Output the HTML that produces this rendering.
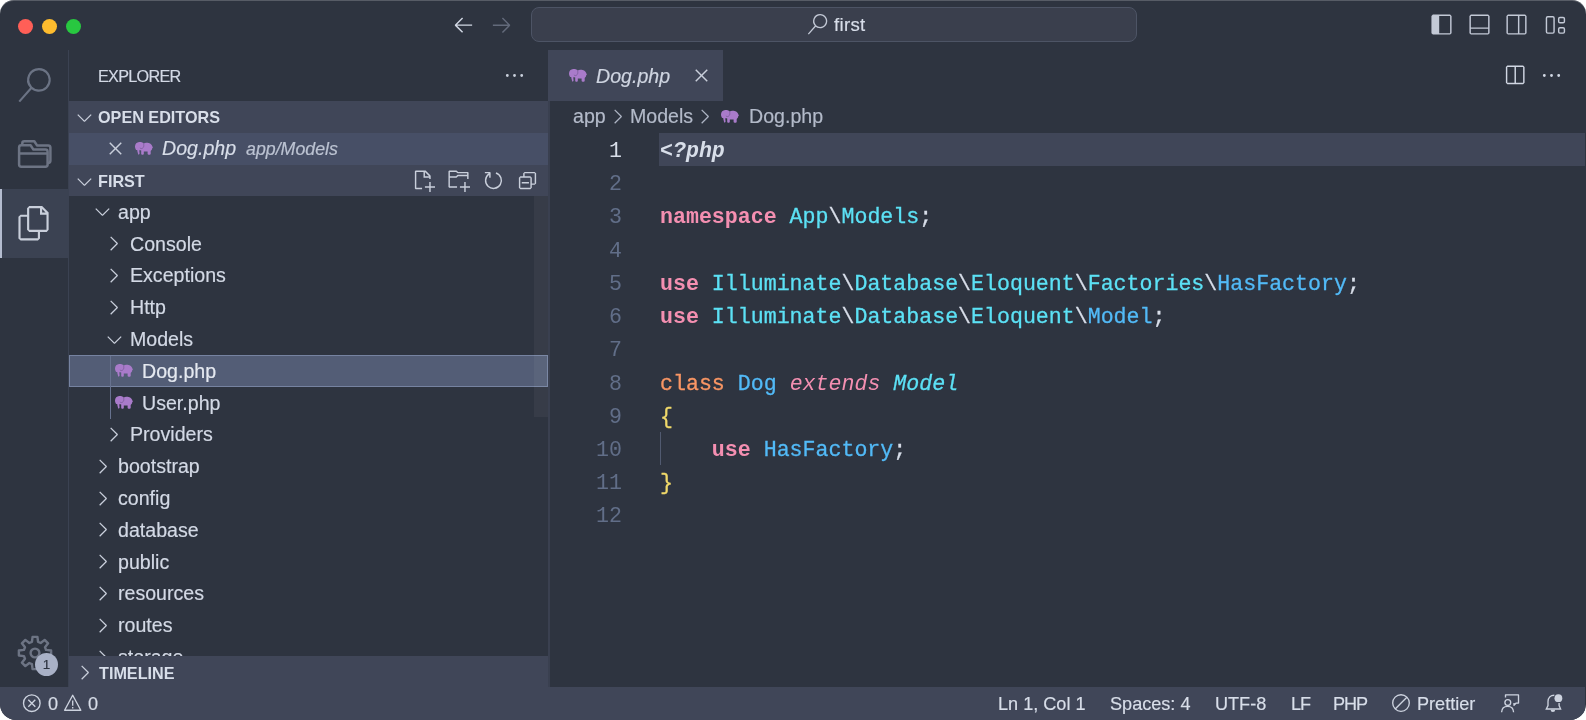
<!DOCTYPE html>
<html lang="en">
<head>
<meta charset="utf-8">
<title>Dog.php — first</title>
<style>
*{box-sizing:border-box;margin:0;padding:0}
html,body{width:1586px;height:720px;background:#fff;overflow:hidden}
body{font-family:"Liberation Sans",sans-serif;color:#d8dee9;font-size:19.6px}
#win{position:absolute;left:0;top:0;width:1586px;height:720px;background:#2e3440;border-radius:14px 14px 16px 16px;overflow:hidden}
#hl{position:absolute;left:0;top:0;right:0;bottom:0;border-radius:14px 14px 16px 16px;box-shadow:inset 0 1px 0 rgba(255,255,255,.2);pointer-events:none;z-index:9}
.abs{position:absolute}
svg{position:absolute;overflow:visible}
.t{position:absolute;white-space:nowrap;line-height:1;-webkit-text-stroke:.18px}
.t,.ln,.code{will-change:transform}
.b{font-weight:bold;-webkit-text-stroke:0}
.i{font-style:italic}
.dot{position:absolute;top:18.5px;width:15px;height:15px;border-radius:50%}
.ln{position:absolute;width:60px;left:561.5px;text-align:right;font-family:"Liberation Mono",monospace;font-size:21.6px;color:#616e88;line-height:1}
.code{position:absolute;left:660px;font-family:"Liberation Mono",monospace;font-size:21.6px;line-height:1;white-space:pre;color:#d8dee9;-webkit-text-stroke:.3px}
.k{color:#f48fb1;font-weight:bold;-webkit-text-stroke:0}
.n{color:#5ce1f5}
.c{color:#52baf7}
.o{color:#f99664}
.y{color:#f0d96a}
</style>
</head>
<body>
<div id="win">
<div class="dot" style="left:17.5px;background:#ff5f57"></div>
<div class="dot" style="left:41.5px;background:#febc2e"></div>
<div class="dot" style="left:65.5px;background:#28c840"></div>
<div class="abs" style="left:531px;top:7.3px;width:606px;height:35px;background:#3a3f4d;border:1.4px solid #4d5465;border-radius:8px"></div>
<svg style="left:451.9px;top:13px" width="23" height="23" viewBox="0 0 16 16"><path fill="#d1d7e3" fill-rule="evenodd" d="M7 3.093l-5 5V8.8l5 5 .707-.707-4.146-4.147H14v-1H3.56L7.708 3.8 7 3.093z"/></svg>
<svg style="left:489.8px;top:13px" width="23" height="23" viewBox="0 0 16 16"><path fill="#636a7b" fill-rule="evenodd" d="M9 13.887l5-5V8.18l-5-5-.707.707 4.146 4.147H2v1h10.44L8.292 13.18l.707.707z"/></svg>
<svg style="left:806.5px;top:13.7px" width="20.7" height="20.7" viewBox="0 0 24 24"><path fill="#c3c9d6" fill-rule="evenodd" d="M15.25 0a8.25 8.25 0 0 0-6.18 13.72L1 22.88l1.12 1 8.05-9.12A8.251 8.251 0 1 0 15.25.01V0zm0 15a6.75 6.75 0 1 1 0-13.5 6.75 6.75 0 0 1 0 13.5z"/></svg>
<div class="t" style="left:834.4px;top:16px;font-size:18.6px;color:#d8dee9;letter-spacing:.3px">first</div>
<svg style="left:1430.4px;top:12.5px" width="23" height="23" viewBox="0 0 16 16"><path fill="#c3c9d6" fill-rule="evenodd" d="M2 1L1 2v12l1 1h12l1-1V2l-1-1H2zm12 13H6.400V2h7.600v12z"/></svg>
<svg style="left:1467.6px;top:12.5px" width="23" height="23" viewBox="0 0 16 16"><path fill="#c3c9d6" fill-rule="evenodd" d="M2 1L1 2v12l1 1h12l1-1V2l-1-1H2zm0 9V2h12v8H2zm0 1h12v3H2v-3z"/></svg>
<svg style="left:1505.4px;top:12.5px" width="23" height="23" viewBox="0 0 16 16"><path fill="#c3c9d6" fill-rule="evenodd" d="M2 1L1 2v12l1 1h12l1-1V2l-1-1H2zm0 13V2h7v12H2zm8 0V2h4v12h-4z"/></svg>
<svg style="left:1543px;top:12.5px" width="23" height="23" viewBox="0 0 16 16"><g fill="none" stroke="#c3c9d6" stroke-width="1"><rect x="2.400" y="2.600" width="5.300" height="11.400" rx=".9"/><rect x="10.900" y="3.100" width="4" height="3.700" rx=".9"/><rect x="10.900" y="10.300" width="4" height="3.700" rx=".9"/></g></svg>
<div class="abs" style="left:0px;top:189px;width:68px;height:69px;background:#3b4252;"></div>
<div class="abs" style="left:0px;top:189px;width:2px;height:69px;background:#b4bccf;"></div>
<div class="abs" style="left:68px;top:50px;width:1px;height:637px;background:#3b4252;"></div>
<svg style="left:17.2px;top:67.7px" width="34.5" height="34.5" viewBox="0 0 24 24"><path fill="#6b7384" fill-rule="evenodd" d="M15.25 0a8.25 8.25 0 0 0-6.18 13.72L1 22.88l1.12 1 8.05-9.12A8.251 8.251 0 1 0 15.25.01V0zm0 15a6.75 6.75 0 1 1 0-13.5 6.75 6.75 0 0 1 0 13.5z"/></svg>
<svg style="left:0;top:0" width="70" height="200" viewBox="0 0 70 200"><g fill="none" stroke="#6d7484" stroke-width="2.5" stroke-linejoin="round" stroke-linecap="round"><path d="M19.100 147.500Q19.100 145.300 21.300 145.300H30.600L33.400 149.600H45.400Q47.600 149.600 47.600 151.800V164.500Q47.600 166.700 45.400 166.700H21.300Q19.100 166.700 19.100 164.500ZM19.100 153.600H47.600"/><path d="M22.300 144.200V143.200Q22.300 141.200 24.300 141.200H34.300L37 145.400H48.200Q50.400 145.400 50.400 147.600V160.500Q50.400 162.600 48.600 162.900"/></g></svg>
<svg style="left:17.2px;top:206px" width="34.5" height="34.5" viewBox="0 0 24 24"><path fill="#c9cfdb" fill-rule="evenodd" d="M17.5 0h-9L7 1.5V6H2.5L1 7.5v15.07L2.500 24h12.07L16 22.570V18h4.7l1.3-1.430V4.500L17.500 0zm0 2.120l2.380 2.380H17.500V2.120zm-3 20.380h-12v-15H7v9.070L8.500 18h6v4.500zm6-6h-12v-15H16V6h4.500v10.500z"/></svg>
<svg style="left:34.5px;top:652.5px" width="1" height="1" viewBox="0 0 1 1"><g fill="none" stroke="#6d7484" stroke-width="2.4" stroke-linejoin="round"><path d="M-3.07 -11.08 L-2.44 -16.12 L2.44 -16.12 L3.07 -11.08 L5.67 -10.01 L9.67 -13.12 L13.12 -9.67 L10.01 -5.67 L11.08 -3.07 L16.12 -2.44 L16.12 2.44 L11.08 3.07 L10.01 5.67 L13.12 9.67 L9.67 13.12 L5.67 10.01 L3.07 11.08 L2.44 16.12 L-2.44 16.12 L-3.07 11.08 L-5.67 10.01 L-9.67 13.12 L-13.12 9.67 L-10.01 5.67 L-11.08 3.07 L-16.12 2.44 L-16.12 -2.44 L-11.08 -3.07 L-10.01 -5.67 L-13.12 -9.67 L-9.67 -13.12 L-5.67 -10.01Z"/><circle cx="0" cy="0" r="4.400"/></g></svg>
<div class="abs" style="left:35px;top:653px;width:23px;height:23px;background:#a9b1c6;border-radius:50%"></div>
<div class="t" style="left:35px;top:658px;font-size:13.5px;color:#2e3440;width:23px;text-align:center">1</div>
<div class="t" style="left:97.7px;top:68px;font-size:16.2px;color:#d3d9e5;letter-spacing:-.7px">EXPLORER</div>
<svg style="left:502.9px;top:64.3px" width="23" height="23" viewBox="0 0 16 16"><path fill="#c9cfdb" fill-rule="evenodd" d="M4 8a1 1 0 1 1-2 0 1 1 0 0 1 2 0zm5 0a1 1 0 1 1-2 0 1 1 0 0 1 2 0zm5 0a1 1 0 1 1-2 0 1 1 0 0 1 2 0z"/></svg>
<div class="abs" style="left:69px;top:101px;width:479px;height:32px;background:#404658;"></div>
<svg style="left:72.6px;top:105.7px" width="23" height="23" viewBox="0 0 16 16"><path fill="#c9cfdb" fill-rule="evenodd" d="M7.976 10.072l4.357-4.357.62.618L8.284 11h-.618L3 6.333l.619-.618 4.357 4.357z"/></svg>
<div class="t b" style="left:98px;top:109px;font-size:16.2px;color:#d8dee9;">OPEN EDITORS</div>
<div class="abs" style="left:69px;top:133px;width:479px;height:32px;background:#474f66;"></div>
<svg style="left:103.75px;top:137.45px" width="23" height="23" viewBox="0 0 16 16"><path fill="#c9cfdb" fill-rule="evenodd" d="M8 8.707l3.646 3.647.708-.707L8.707 8l3.647-3.646-.707-.708L8 7.293 4.354 3.646l-.707.708L7.293 8l-3.646 3.646.707.708L8 8.707z"/></svg>
<svg style="left:135px;top:141.7px" width="18" height="13" viewBox="0 0 18 13"><path fill="#a97bca" d="M4.200 0.100C6 -0.100 7.800 0.500 8.700 1.500C9.800 0.700 12 0.500 13.600 0.900C15.800 1.400 17.200 3 17.600 4.900L18 5.400L17.300 6C17.200 7.200 16.600 8.200 15.700 8.900L15.700 12C15.700 13.100 12.600 13.100 12.600 12L12.600 9.600L8.800 9.600L8.800 12C8.800 13.100 6.200 13.100 6.200 12L6.200 8.600C5.600 8.500 5 8.300 4.500 8C4.300 9 4.300 10 4.500 10.800C4.700 11.600 4.500 12.400 3.700 12.600C3 12.700 2.800 12 3 11.500C2.600 10.400 2.300 9.200 2.200 8C1.600 8.100 1 7.900 0.800 7.400C0.200 6.600 0 5.600 0 4.600C0 2 1.800 0.300 4.200 0.100Z"/><path fill="none" stroke="#4a3a66" stroke-opacity=".45" stroke-width=".8" d="M8.600 1.700C9.200 3.500 8.800 5.500 7.400 6.300C6.400 6.800 5.400 6.500 4.900 5.800"/></svg>
<div class="t i" style="left:161.5px;top:139px;font-size:19.6px;color:#d8dee9;">Dog.php</div>
<div class="t i" style="left:245.5px;top:141px;font-size:17.8px;color:#bcc3d2;">app/Models</div>
<div class="abs" style="left:69px;top:165px;width:479px;height:31px;background:#404658;"></div>
<svg style="left:72.6px;top:169.7px" width="23" height="23" viewBox="0 0 16 16"><path fill="#c9cfdb" fill-rule="evenodd" d="M7.976 10.072l4.357-4.357.62.618L8.284 11h-.618L3 6.333l.619-.618 4.357 4.357z"/></svg>
<div class="t b" style="left:98px;top:173px;font-size:16.2px;color:#d8dee9;">FIRST</div>
<svg style="left:412px;top:169.1px" width="23" height="23" viewBox="0 0 16 16"><path fill="#c9cfdb" fill-rule="evenodd" d="M9.5 1.1l3.4 3.5.1.4v2h-1V6H8V2H3v11h4v1H2.5l-.5-.5v-12l.5-.5h6.7l.3.1zM9 2v3h2.900L9 2zm4 14h-1v-3H9v-1h3V9h1v3h3v1h-3v3z"/></svg>
<svg style="left:446.8px;top:169.1px" width="23" height="23" viewBox="0 0 16 16"><path fill="#c9cfdb" fill-rule="evenodd" d="M14.5 2H7.710l-.85-.85L6.510 1h-5l-.5.5v11l.5.5H7v-1H1.990V6h4.490l.35-.15.86-.86H14v1.500l-.001.51h1.011V2.500L14.500 2zm-.51 2h-6.500l-.35.15-.86.86H2v-3h4.290l.85.85.36.15H14l-.01.990zM13 16h-1v-3H9v-1h3V9h1v3h3v1h-3v3z"/></svg>
<svg style="left:481.5px;top:169.1px" width="23" height="23" viewBox="0 0 16 16"><path fill="#c9cfdb" fill-rule="evenodd" d="M4.681 3H2V2h3.500l.5.5V6H5V4a5 5 0 1 0 4.530-.761l.302-.954A6 6 0 1 1 4.681 3z"/></svg>
<svg style="left:516.2px;top:169.1px" width="23" height="23" viewBox="0 0 16 16"><path fill="#c9cfdb" fill-rule="evenodd" d="M9 9H4v1h5V9zM5 3l1-1h7l1 1v7l-1 1h-2v2l-1 1H3l-1-1V6l1-1h2V3zm1 2h4l1 1v4h2V3H6v2zm4 1H3v7h7V6z"/></svg>
<div class="abs" style="left:69px;top:355px;width:479px;height:32px;background:#535d76;border:1px solid #7683a1"></div>
<div class="abs" style="left:110px;top:356px;width:1px;height:62.5px;background:#67728f;"></div>
<svg style="left:91.1px;top:200.3px" width="23" height="23" viewBox="0 0 16 16"><path fill="#c9cfdb" fill-rule="evenodd" d="M7.976 10.072l4.357-4.357.62.618L8.284 11h-.618L3 6.333l.619-.618 4.357 4.357z"/></svg>
<div class="t" style="left:118.1px;top:203px;font-size:19.6px;color:#d3d9e5;">app</div>
<svg style="left:102.1px;top:232.1px" width="23" height="23" viewBox="0 0 16 16"><path fill="#c9cfdb" fill-rule="evenodd" d="M10.072 8.024L5.715 3.667l.618-.62L11 7.716v.618L6.333 13l-.618-.619 4.357-4.357z"/></svg>
<div class="t" style="left:130px;top:235px;font-size:19.6px;color:#d3d9e5;">Console</div>
<svg style="left:102.1px;top:263.9px" width="23" height="23" viewBox="0 0 16 16"><path fill="#c9cfdb" fill-rule="evenodd" d="M10.072 8.024L5.715 3.667l.618-.62L11 7.716v.618L6.333 13l-.618-.619 4.357-4.357z"/></svg>
<div class="t" style="left:130px;top:266px;font-size:19.6px;color:#d3d9e5;">Exceptions</div>
<svg style="left:102.1px;top:295.7px" width="23" height="23" viewBox="0 0 16 16"><path fill="#c9cfdb" fill-rule="evenodd" d="M10.072 8.024L5.715 3.667l.618-.62L11 7.716v.618L6.333 13l-.618-.619 4.357-4.357z"/></svg>
<div class="t" style="left:130px;top:298px;font-size:19.6px;color:#d3d9e5;">Http</div>
<svg style="left:102.6px;top:327.5px" width="23" height="23" viewBox="0 0 16 16"><path fill="#c9cfdb" fill-rule="evenodd" d="M7.976 10.072l4.357-4.357.62.618L8.284 11h-.618L3 6.333l.619-.618 4.357 4.357z"/></svg>
<div class="t" style="left:130px;top:330px;font-size:19.6px;color:#d3d9e5;">Models</div>
<svg style="left:114.8px;top:364.1px" width="18" height="13" viewBox="0 0 18 13"><path fill="#a97bca" d="M4.200 0.100C6 -0.100 7.800 0.500 8.700 1.500C9.800 0.700 12 0.500 13.600 0.900C15.800 1.400 17.200 3 17.600 4.900L18 5.400L17.300 6C17.200 7.200 16.600 8.200 15.700 8.900L15.700 12C15.700 13.100 12.600 13.100 12.600 12L12.600 9.600L8.800 9.600L8.800 12C8.800 13.100 6.200 13.100 6.200 12L6.200 8.600C5.600 8.500 5 8.300 4.500 8C4.300 9 4.300 10 4.500 10.800C4.700 11.600 4.500 12.400 3.700 12.600C3 12.700 2.800 12 3 11.500C2.600 10.400 2.300 9.200 2.200 8C1.600 8.100 1 7.900 0.800 7.400C0.200 6.600 0 5.600 0 4.600C0 2 1.800 0.300 4.200 0.100Z"/><path fill="none" stroke="#4a3a66" stroke-opacity=".45" stroke-width=".8" d="M8.600 1.700C9.200 3.500 8.800 5.500 7.400 6.300C6.400 6.800 5.400 6.500 4.900 5.800"/></svg>
<div class="t" style="left:141.9px;top:362px;font-size:19.6px;color:#e5e9f0;">Dog.php</div>
<svg style="left:114.8px;top:395.9px" width="18" height="13" viewBox="0 0 18 13"><path fill="#a97bca" d="M4.200 0.100C6 -0.100 7.800 0.500 8.700 1.500C9.800 0.700 12 0.500 13.600 0.900C15.800 1.400 17.200 3 17.600 4.900L18 5.400L17.300 6C17.200 7.200 16.600 8.200 15.700 8.900L15.700 12C15.700 13.100 12.600 13.100 12.600 12L12.600 9.600L8.800 9.600L8.800 12C8.800 13.100 6.200 13.100 6.200 12L6.200 8.600C5.600 8.500 5 8.300 4.500 8C4.300 9 4.300 10 4.500 10.800C4.700 11.600 4.500 12.400 3.700 12.600C3 12.700 2.800 12 3 11.500C2.600 10.400 2.300 9.200 2.200 8C1.600 8.100 1 7.900 0.800 7.400C0.200 6.600 0 5.600 0 4.600C0 2 1.800 0.300 4.200 0.100Z"/><path fill="none" stroke="#4a3a66" stroke-opacity=".45" stroke-width=".8" d="M8.600 1.700C9.200 3.500 8.800 5.500 7.400 6.300C6.400 6.800 5.400 6.500 4.900 5.800"/></svg>
<div class="t" style="left:141.9px;top:394px;font-size:19.6px;color:#d3d9e5;">User.php</div>
<svg style="left:102.1px;top:422.9px" width="23" height="23" viewBox="0 0 16 16"><path fill="#c9cfdb" fill-rule="evenodd" d="M10.072 8.024L5.715 3.667l.618-.62L11 7.716v.618L6.333 13l-.618-.619 4.357-4.357z"/></svg>
<div class="t" style="left:130px;top:425px;font-size:19.6px;color:#d3d9e5;">Providers</div>
<svg style="left:90.6px;top:454.7px" width="23" height="23" viewBox="0 0 16 16"><path fill="#c9cfdb" fill-rule="evenodd" d="M10.072 8.024L5.715 3.667l.618-.62L11 7.716v.618L6.333 13l-.618-.619 4.357-4.357z"/></svg>
<div class="t" style="left:118.1px;top:457px;font-size:19.6px;color:#d3d9e5;">bootstrap</div>
<svg style="left:90.6px;top:486.5px" width="23" height="23" viewBox="0 0 16 16"><path fill="#c9cfdb" fill-rule="evenodd" d="M10.072 8.024L5.715 3.667l.618-.62L11 7.716v.618L6.333 13l-.618-.619 4.357-4.357z"/></svg>
<div class="t" style="left:118.1px;top:489px;font-size:19.6px;color:#d3d9e5;">config</div>
<svg style="left:90.6px;top:518.3px" width="23" height="23" viewBox="0 0 16 16"><path fill="#c9cfdb" fill-rule="evenodd" d="M10.072 8.024L5.715 3.667l.618-.62L11 7.716v.618L6.333 13l-.618-.619 4.357-4.357z"/></svg>
<div class="t" style="left:118.1px;top:521px;font-size:19.6px;color:#d3d9e5;">database</div>
<svg style="left:90.6px;top:550.1px" width="23" height="23" viewBox="0 0 16 16"><path fill="#c9cfdb" fill-rule="evenodd" d="M10.072 8.024L5.715 3.667l.618-.62L11 7.716v.618L6.333 13l-.618-.619 4.357-4.357z"/></svg>
<div class="t" style="left:118.1px;top:553px;font-size:19.6px;color:#d3d9e5;">public</div>
<svg style="left:90.6px;top:581.9px" width="23" height="23" viewBox="0 0 16 16"><path fill="#c9cfdb" fill-rule="evenodd" d="M10.072 8.024L5.715 3.667l.618-.62L11 7.716v.618L6.333 13l-.618-.619 4.357-4.357z"/></svg>
<div class="t" style="left:118.1px;top:584px;font-size:19.6px;color:#d3d9e5;">resources</div>
<svg style="left:90.6px;top:613.7px" width="23" height="23" viewBox="0 0 16 16"><path fill="#c9cfdb" fill-rule="evenodd" d="M10.072 8.024L5.715 3.667l.618-.62L11 7.716v.618L6.333 13l-.618-.619 4.357-4.357z"/></svg>
<div class="t" style="left:118.1px;top:616px;font-size:19.6px;color:#d3d9e5;">routes</div>
<svg style="left:90.6px;top:645.5px" width="23" height="23" viewBox="0 0 16 16"><path fill="#c9cfdb" fill-rule="evenodd" d="M10.072 8.024L5.715 3.667l.618-.62L11 7.716v.618L6.333 13l-.618-.619 4.357-4.357z"/></svg>
<div class="t" style="left:118.1px;top:648px;font-size:19.6px;color:#d3d9e5;">storage</div>
<div class="abs" style="left:534px;top:196px;width:14px;height:221px;background:rgba(255,255,255,.045);"></div>
<div class="abs" style="left:69px;top:656px;width:479px;height:31px;background:#404658;"></div>
<svg style="left:72.5px;top:660.9px" width="23" height="23" viewBox="0 0 16 16"><path fill="#c9cfdb" fill-rule="evenodd" d="M10.072 8.024L5.715 3.667l.618-.62L11 7.716v.618L6.333 13l-.618-.619 4.357-4.357z"/></svg>
<div class="t b" style="left:98.6px;top:665px;font-size:16.2px;color:#d8dee9;">TIMELINE</div>
<div class="abs" style="left:548px;top:50px;width:2px;height:637px;background:#3a4050;"></div>
<div class="abs" style="left:548px;top:50px;width:175px;height:51px;background:#404658;"></div>
<svg style="left:568.9px;top:68.9px" width="18" height="13" viewBox="0 0 18 13"><path fill="#a97bca" d="M4.200 0.100C6 -0.100 7.800 0.500 8.700 1.500C9.800 0.700 12 0.500 13.600 0.900C15.800 1.400 17.200 3 17.600 4.900L18 5.400L17.300 6C17.200 7.200 16.600 8.200 15.700 8.900L15.700 12C15.700 13.100 12.600 13.100 12.600 12L12.600 9.600L8.800 9.600L8.800 12C8.800 13.100 6.200 13.100 6.200 12L6.200 8.600C5.600 8.500 5 8.300 4.500 8C4.300 9 4.300 10 4.500 10.800C4.700 11.600 4.500 12.400 3.700 12.600C3 12.700 2.800 12 3 11.500C2.600 10.400 2.300 9.200 2.200 8C1.600 8.100 1 7.900 0.800 7.400C0.200 6.600 0 5.600 0 4.600C0 2 1.800 0.300 4.200 0.100Z"/><path fill="none" stroke="#4a3a66" stroke-opacity=".45" stroke-width=".8" d="M8.600 1.700C9.200 3.500 8.800 5.500 7.400 6.300C6.400 6.800 5.400 6.500 4.900 5.800"/></svg>
<div class="t i" style="left:596.4px;top:67px;font-size:19.6px;color:#cfd5e1;">Dog.php</div>
<svg style="left:690px;top:63.6px" width="23" height="23" viewBox="0 0 16 16"><path fill="#c9cfdb" fill-rule="evenodd" d="M8 8.707l3.646 3.647.708-.707L8.707 8l3.647-3.646-.707-.708L8 7.293 4.354 3.646l-.707.708L7.293 8l-3.646 3.646.707.708L8 8.707z"/></svg>
<svg style="left:1502.5px;top:63.9px" width="23" height="23" viewBox="0 0 16 16"><path fill="#d1d7e3" fill-rule="evenodd" d="M14 1H3L2 2v11l1 1h11l1-1V2l-1-1zM8 13H3V2h5v11zm6 0H9V2h5v11z"/></svg>
<svg style="left:1540.2px;top:64.2px" width="23" height="23" viewBox="0 0 16 16"><path fill="#d1d7e3" fill-rule="evenodd" d="M4 8a1 1 0 1 1-2 0 1 1 0 0 1 2 0zm5 0a1 1 0 1 1-2 0 1 1 0 0 1 2 0zm5 0a1 1 0 1 1-2 0 1 1 0 0 1 2 0z"/></svg>
<div class="t" style="left:572.9px;top:107px;font-size:19.6px;color:#b3bac9;">app</div>
<svg style="left:605.7px;top:105.15px" width="23" height="23" viewBox="0 0 16 16"><path fill="#aeb5c4" fill-rule="evenodd" d="M10.072 8.024L5.715 3.667l.618-.62L11 7.716v.618L6.333 13l-.618-.619 4.357-4.357z"/></svg>
<div class="t" style="left:629.8px;top:107px;font-size:19.6px;color:#b3bac9;">Models</div>
<svg style="left:692.6px;top:105.15px" width="23" height="23" viewBox="0 0 16 16"><path fill="#aeb5c4" fill-rule="evenodd" d="M10.072 8.024L5.715 3.667l.618-.62L11 7.716v.618L6.333 13l-.618-.619 4.357-4.357z"/></svg>
<svg style="left:720.9px;top:110px" width="18" height="13" viewBox="0 0 18 13"><path fill="#a97bca" d="M4.200 0.100C6 -0.100 7.800 0.500 8.700 1.500C9.800 0.700 12 0.500 13.600 0.900C15.800 1.400 17.200 3 17.600 4.900L18 5.400L17.300 6C17.200 7.200 16.600 8.200 15.700 8.900L15.700 12C15.700 13.100 12.600 13.100 12.600 12L12.600 9.600L8.800 9.600L8.800 12C8.800 13.100 6.200 13.100 6.200 12L6.200 8.600C5.600 8.500 5 8.300 4.500 8C4.300 9 4.300 10 4.500 10.800C4.700 11.600 4.500 12.400 3.700 12.600C3 12.700 2.800 12 3 11.500C2.600 10.400 2.300 9.200 2.200 8C1.600 8.100 1 7.900 0.800 7.400C0.200 6.600 0 5.600 0 4.600C0 2 1.800 0.300 4.200 0.100Z"/><path fill="none" stroke="#4a3a66" stroke-opacity=".45" stroke-width=".8" d="M8.600 1.700C9.200 3.500 8.800 5.500 7.400 6.300C6.400 6.800 5.400 6.500 4.900 5.800"/></svg>
<div class="t" style="left:748.6px;top:107px;font-size:19.6px;color:#b3bac9;">Dog.php</div>
<div class="abs" style="left:659px;top:133px;width:926px;height:33px;background:#404658;"></div>
<div class="ln" style="top:141px;color:#d8dee9">1</div>
<div class="ln" style="top:174px;">2</div>
<div class="ln" style="top:207px;">3</div>
<div class="ln" style="top:241px;">4</div>
<div class="ln" style="top:274px;">5</div>
<div class="ln" style="top:307px;">6</div>
<div class="ln" style="top:340px;">7</div>
<div class="ln" style="top:374px;">8</div>
<div class="ln" style="top:407px;">9</div>
<div class="ln" style="top:440px;">10</div>
<div class="ln" style="top:473px;">11</div>
<div class="ln" style="top:506px;">12</div>
<div class="code" style="top:141px"><span class="i b">&lt;?php</span></div>
<div class="code" style="top:207px"><span class="k">namespace</span> <span class="n">App</span>\<span class="n">Models</span>;</div>
<div class="code" style="top:274px"><span class="k">use</span> <span class="n">Illuminate</span>\<span class="n">Database</span>\<span class="n">Eloquent</span>\<span class="n">Factories</span>\<span class="c">HasFactory</span>;</div>
<div class="code" style="top:307px"><span class="k">use</span> <span class="n">Illuminate</span>\<span class="n">Database</span>\<span class="n">Eloquent</span>\<span class="c">Model</span>;</div>
<div class="code" style="top:374px"><span class="o">class</span> <span class="c">Dog</span> <span class="k i" style="font-weight:normal">extends</span> <span class="n i">Model</span></div>
<div class="code" style="top:407px"><span class="y">{</span></div>
<div class="code" style="top:440px">    <span class="k">use</span> <span class="c">HasFactory</span>;</div>
<div class="code" style="top:473px"><span class="y">}</span></div>
<div class="abs" style="left:659.5px;top:432px;width:1px;height:33.4px;background:#515a70;"></div>
<div class="abs" style="left:0px;top:687px;width:1585px;height:33px;background:#404658;"></div>
<div class="t" style="left:47.5px;top:695px;font-size:18.1px;color:#d8dee9;">0</div>
<div class="t" style="left:88.3px;top:695px;font-size:18.1px;color:#d8dee9;">0</div>
<div class="t" style="left:998.3px;top:695px;font-size:18.1px;color:#d8dee9;">Ln 1, Col 1</div>
<div class="t" style="left:1110px;top:695px;font-size:18.1px;color:#d8dee9;">Spaces: 4</div>
<div class="t" style="left:1214.5px;top:695px;font-size:18.1px;color:#d8dee9;">UTF-8</div>
<div class="t" style="left:1290.7px;top:695px;font-size:18.1px;color:#d8dee9;letter-spacing:-1.1px">LF</div>
<div class="t" style="left:1333px;top:695px;font-size:18.1px;color:#d8dee9;letter-spacing:-1.1px">PHP</div>
<div class="t" style="left:1416.6px;top:695px;font-size:18.1px;color:#d8dee9;">Prettier</div>
<svg style="left:0;top:0" width="1586" height="720" viewBox="0 0 1586 720"><g fill="none" stroke="#cdd3df" stroke-width="1.35"><circle cx="31.8" cy="703.2" r="8.3"/><path d="M28.300 699.700l7 7M35.300 699.700l-7 7"/><path d="M72.700 695.300L64.600 710.200H80.800Z" stroke-linejoin="round"/><path d="M72.700 700.500v5.200M72.700 707v1.500"/><circle cx="1401" cy="703" r="8.300"/><path d="M1395.200 708.900l11.700-11.700"/><circle cx="1507.800" cy="702.600" r="2.900"/><path d="M1501.600 712.200c.2-3.500 2.600-5.800 6-5.800s5.800 2.300 6 5.800"/><path d="M1505.500 697.500v-2.600h13v8.200h-2.300l-2.200 2.200v-2.200" stroke-linejoin="round"/><path d="M1554.300 695.200c-3.800 0-6.300 2.700-6.300 6.400v3.900l-1.700 3.500h14.300l-1.500-3.400v-2.600"/><path d="M1550.600 709.800a2.300 2.300 0 0 0 4.600 0z" fill="#cdd3df" stroke="none"/></g><circle cx="1558.400" cy="698.200" r="3.900" fill="#cdd3df"/></svg>
<div id="hl"></div>
</div>
</body>
</html>
